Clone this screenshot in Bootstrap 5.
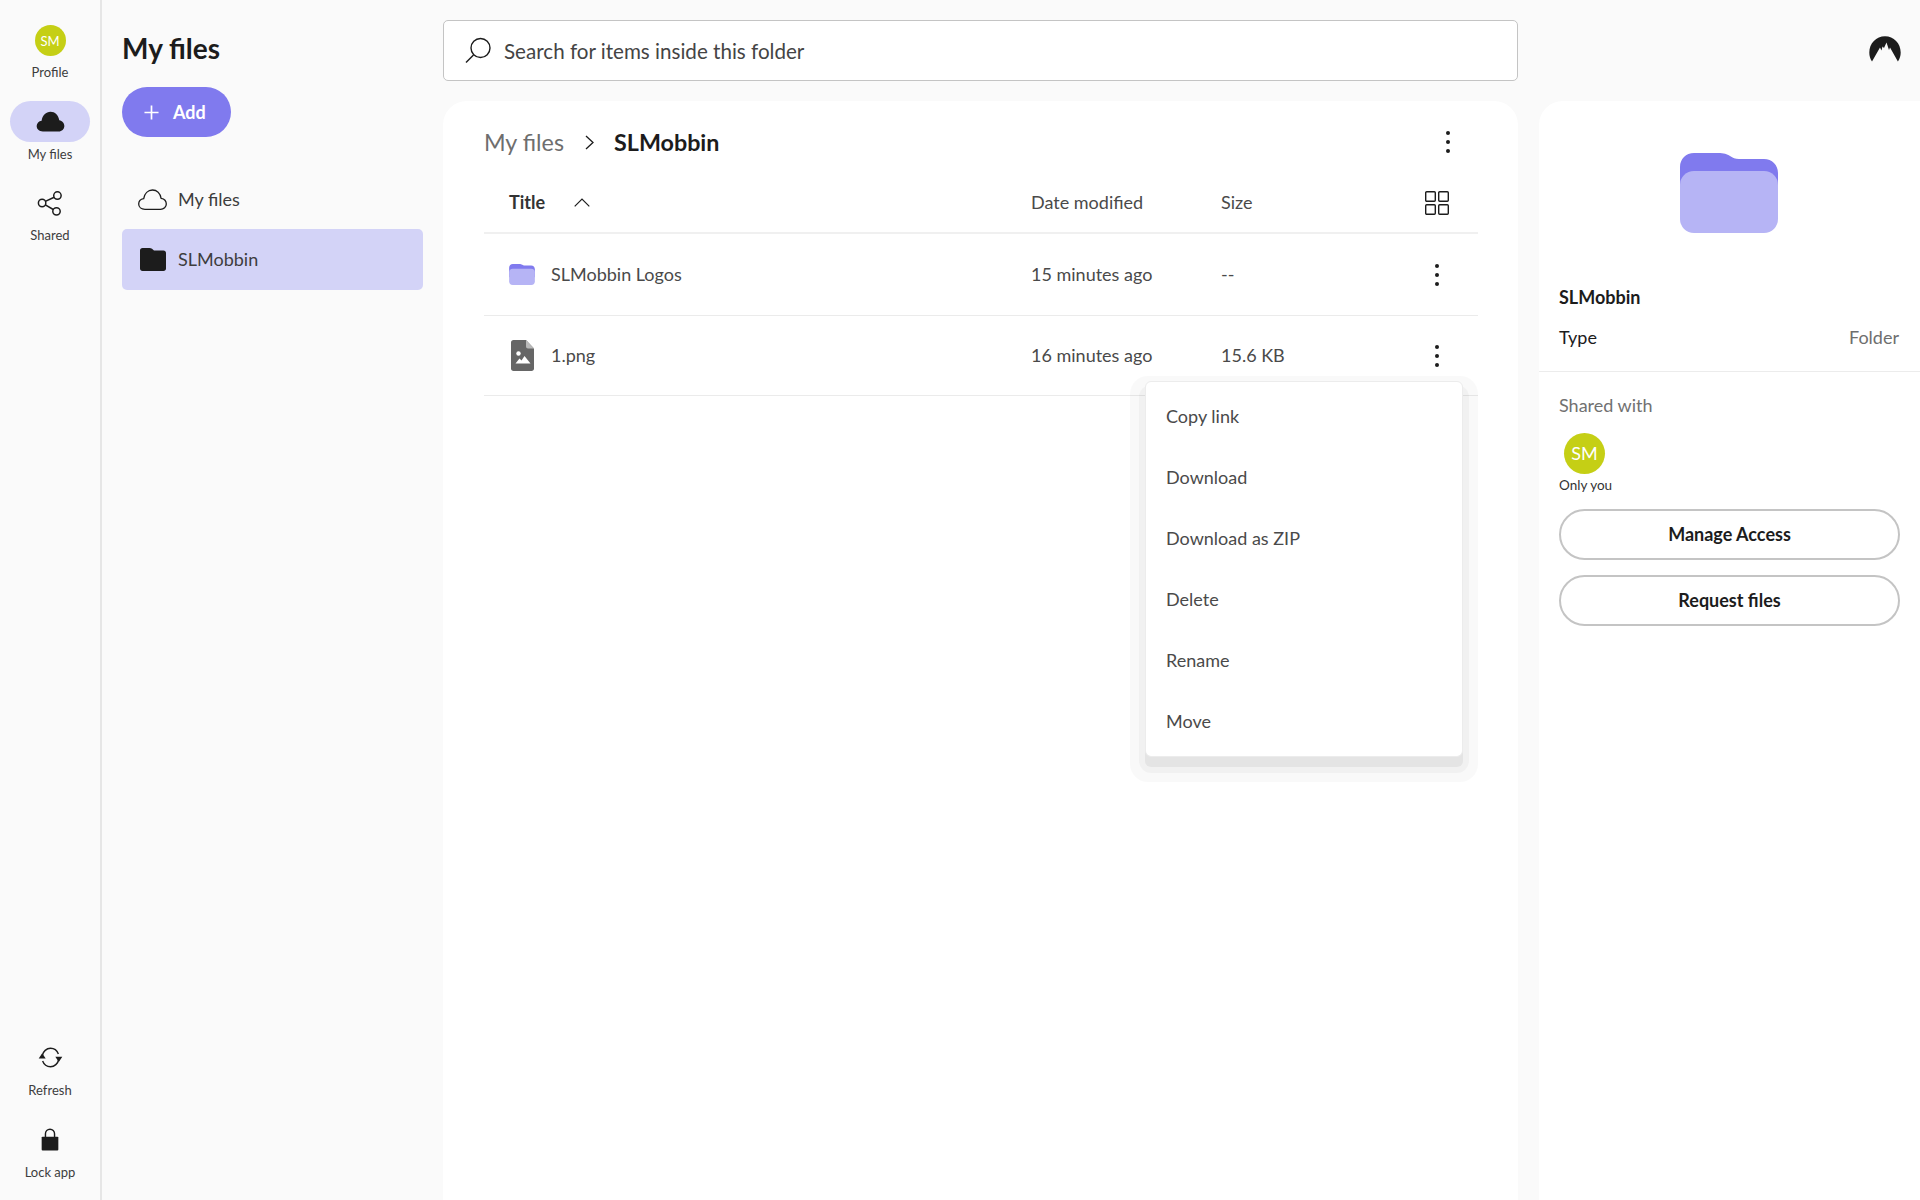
<!DOCTYPE html>
<html lang="en">
<head>
  <meta charset="UTF-8">
  <title>My files</title>
  <meta name="viewport" content="width=device-width, initial-scale=1">
  <link href="https://cdn.jsdelivr.net/npm/bootstrap@5.3.0/dist/css/bootstrap.min.css" rel="stylesheet" />
  <style>
    body {
      background-color: #fafafa;
      font-family: "Lato", "Liberation Sans", sans-serif;
      color: #1c1c1c;
      height: 1200px;
      overflow: hidden;
    }
    /* icon rail */
    .rail {
      width: 102px;
      border-right: 2px solid #e6e6e6;
      padding-top: 25px;
      padding-bottom: 20px;
    }
    .rail-item {
      display: flex;
      flex-direction: column;
      align-items: center;
      font-size: 13px;
      line-height: 16px;
      color: #3d3d3d;
      margin-bottom: 21px;
    }
    .rail-item.is-tight { margin-bottom: 20px; }
    .rail-icon {
      width: 80px;
      height: 41px;
      margin-bottom: 4px;
      display: flex;
      align-items: center;
      justify-content: center;
      border-radius: 21px;
    }
    .rail-icon.is-on { background-color: #d3d3f7; }
    .avatar-sm {
      width: 31px;
      height: 31px;
      margin-bottom: 8px;
      border-radius: 50%;
      background-color: #c5cf15;
      color: #fff;
      font-size: 13px;
      display: flex;
      align-items: center;
      justify-content: center;
    }
    /* folder panel */
    .folder-panel {
      width: 341px;
      padding: 0 20px;
    }
    .panel-title {
      font-size: 28px;
      font-weight: 700;
      line-height: 34px;
      margin: 31px 0 22px;
    }
    .add-btn {
      width: 109px;
      height: 50px;
      padding: 0 0 0 22px;
      gap: 14px;
      border-radius: 25px;
      background-color: #807aee;
      border: 0;
      color: #fff;
      font-size: 18px;
      font-weight: 700;
      margin-bottom: 32px;
    }
    .add-btn:hover { background-color: #807aee; color: #fff; }
    .tree-row {
      height: 61px;
      border-radius: 5px;
      padding-left: 18px;
      font-size: 18px;
      color: #3d3d3d;
    }
    .tree-row.is-on { background-color: #d3d3f7; }
    .tree-row svg { margin-right: 12px; }
    .tree-row.is-plain { height: 60px; padding-left: 16px; }
    .tree-row.is-plain svg { margin-right: 11px; }
    /* top row */
    .search-row { height: 101px; padding-top: 20px; }
    .search-box {
      width: 1075px;
      height: 61px;
      background-color: #fff;
      border: 1px solid #c4c4c4;
      border-radius: 5px;
      padding: 2px 0 0 20px;
      font-size: 20.6px;
      color: #444;
    }
    .search-box svg { margin-right: 12px; margin-top: -2px; }
    .corner-logo { margin-left: 351px; margin-top: 16px; }
    /* file list */
    .files-card {
      width: 1075px;
      background-color: #fff;
      border-radius: 24px 24px 0 0;
      padding: 0 40px 0 41px;
    }
    .crumbs {
      height: 74px;
      padding: 8px 27px 0 0;
      font-size: 23.3px;
    }
    .crumb-dim { color: #6e6e6e; }
    .crumb-now { font-weight: 700; }
    .crumb-sep { margin: 0 20px 0 21px; }
    .list-row {
      padding-left: 25px;
      font-size: 18px;
      color: #4a4a4a;
      border-bottom: 1px solid #ebebeb;
    }
    .list-head { height: 59px; padding-bottom: 2px; border-bottom-width: 2px; border-color: #f0f0f0; }
    .row-a { height: 82px; }
    .row-b { height: 80px; }
    .name-col { width: 522px; }
    .date-col { width: 190px; }
    .size-col { width: 196px; }
    .act-col { width: 40px; display: flex; justify-content: center; }
    .title-head { font-weight: 700; color: #333; }
    .sort-mark { margin-left: 29px; }
    .file-icon { width: 26px; margin-right: 16px; display: flex; justify-content: center; }
    /* context menu */
    .row-menu.dropdown-menu {
      position: absolute;
      top: 280px;
      left: 702px;
      width: 318px;
      padding: 4px 0;
      border: 1px solid #ececec;
      border-radius: 6px;
      box-shadow: 0 10px 0 0 rgba(0,0,0,.05), 0 10px 0 6px rgba(0,0,0,.03), 0 10px 0 15px rgba(0,0,0,.025);
    }
    .row-menu .dropdown-item {
      height: 61px;
      line-height: 61px;
      padding: 0 20px;
      font-size: 18px;
      color: #4a4a4a;
    }
    /* details */
    .details-card {
      width: 381px;
      background-color: #fff;
      border-radius: 24px 0 0 0;
    }
    .details-top { padding: 52px 21px 0 20px; height: 271px; border-bottom: 1px solid #ececec; }
    .details-name { font-size: 18px; font-weight: 700; line-height: 22px; margin-top: 53px; }
    .details-type { font-size: 18px; line-height: 22px; margin-top: 18px; }
    .type-val { color: #6e6e6e; }
    .details-body { padding: 22px 20px 0 20px; }
    .shared-label { font-size: 18px; line-height: 22px; color: #717171; }
    .avatar-md {
      width: 41px;
      height: 41px;
      margin: 17px 0 0 5px;
      border-radius: 50%;
      background-color: #c5cf15;
      color: #fff;
      font-size: 18px;
      display: flex;
      align-items: center;
      justify-content: center;
    }
    .only-you { font-size: 13.5px; line-height: 16px; margin: 3px 0 16px; color: #333; }
    .pill-btn {
      height: 51px;
      border-radius: 26px;
      border: 2px solid #c4c4c4;
      background-color: #fff;
      font-size: 18px;
      font-weight: 700;
      color: #1c1c1c;
      margin-bottom: 15px;
    }
    .pill-btn:hover { background-color: #fff; border-color: #c4c4c4; color: #1c1c1c; }
  </style>
</head>
<body class="d-flex">

<!-- Icon rail -->
<aside class="rail d-flex flex-column justify-content-between flex-shrink-0">
  <div>
    <div class="rail-item">
      <div class="avatar-sm">SM</div>
      Profile
    </div>
    <div class="rail-item is-tight">
      <div class="rail-icon is-on">
        <svg width="29" height="21" viewBox="0 0 30 22"><path fill="#1c1c1c" d="M7 21.500C3 21.500.5 19 .5 15.800c0-3 2.200-5.300 5.200-5.700C6.500 4.600 10.300.8 15 .8c4.600 0 8.300 3.600 9.200 8.900 3 .5 5.300 2.900 5.300 6 0 3.200-2.600 5.800-6 5.800H7z"/></svg>
      </div>
      My files
    </div>
    <div class="rail-item">
      <div class="rail-icon">
        <svg width="26" height="26" viewBox="0 0 28 28" fill="none" stroke="#1c1c1c" stroke-width="1.600"><circle cx="22" cy="6" r="4"/><circle cx="5.500" cy="14" r="4"/><circle cx="21" cy="23" r="4"/><path d="M9 12.300l9.500-4.500M9 16l8.500 5"/></svg>
      </div>
      Shared
    </div>
  </div>
  <div>
    <div class="rail-item">
      <div class="rail-icon">
        <svg width="25" height="21" viewBox="0 0 28 24" fill="none" stroke="#1c1c1c" stroke-width="1.600"><path d="M4.500 10C5.500 5 9.500 1.500 14 1.500c4 0 7.500 2.500 9 6.500M23.500 14c-1 5-5 8.500-9.500 8.500-4 0-7.500-2.500-9-6.500"/><path fill="#1c1c1c" stroke="none" d="M4.500 7L.5 13h8zM23.500 17l-4-6h8z"/></svg>
      </div>
      Refresh
    </div>
    <div class="rail-item mb-0">
      <div class="rail-icon">
        <svg width="18" height="23" viewBox="0 0 19 24"><path fill="none" stroke="#1c1c1c" stroke-width="1.500" d="M4.700 10V6a4.800 4.800 0 0 1 9.600 0v4"/><rect x=".7" y="9" width="17.600" height="14.500" rx="1" fill="#1c1c1c"/></svg>
      </div>
      Lock app
    </div>
  </div>
</aside>

<!-- Folder panel -->
<aside class="folder-panel flex-shrink-0">
  <h1 class="panel-title">My files</h1>
  <button class="btn add-btn d-flex align-items-center" type="button">
    <svg width="15" height="15" viewBox="0 0 16 16" stroke="#fff" stroke-width="1.800"><path d="M8 .5v15M.5 8h15"/></svg>
    Add
  </button>
  <div class="tree-row is-plain d-flex align-items-center">
    <svg width="29" height="21" viewBox="0 0 29 21" fill="none" stroke="#1c1c1c" stroke-width="1.300"><path d="M7 20.300C3.300 20.300.7 18 .7 15c0-2.800 2-5 5-5.400C6.500 4.500 10 1 14.500 1c4.300 0 7.700 3.300 8.600 8.300 3 .5 5.200 2.800 5.200 5.700 0 3-2.500 5.300-5.800 5.300H7z"/></svg>
    My files
  </div>
  <div class="tree-row is-on d-flex align-items-center">
    <svg width="26" height="23" viewBox="0 0 26 23"><path fill="#1c1c1c" d="M0 2.500C0 1 1 0 2.500 0h7c1 0 1.800.3 2.500.8L14 2.500h9.500C25 2.500 26 3.500 26 5v15.500c0 1.500-1 2.500-2.500 2.500h-21C1 23 0 22 0 20.500z"/></svg>
    SLMobbin
  </div>
</aside>

<!-- Workspace -->
<div class="flex-grow-1 d-flex flex-column">
  <div class="search-row d-flex align-items-start">
    <div class="search-box d-flex align-items-center flex-shrink-0">
      <svg width="28" height="28" viewBox="0 0 28 28" fill="none" stroke="#1c1c1c" stroke-width="1.400"><circle cx="16.500" cy="11" r="9.500"/><path d="M9.500 18L2 25.500"/></svg>
      Search for items inside this folder
    </div>
    <svg class="corner-logo flex-shrink-0" width="32" height="26" viewBox="0 0 32 26"><path fill="#1c1c1c" d="M3 25.500C1.200 22.800 .3 19.800.3 16.500.3 7.500 7.300.3 16 .3s15.700 7.200 15.700 16.200c0 3.300-1 6.300-2.800 9l-7.900-14-1 2.500L17.500 6.500 15 12l-1.500-1.500-1 4-1.500-3z"/></svg>
  </div>

  <div class="d-flex flex-grow-1" style="gap:21px">
    <main class="files-card position-relative flex-shrink-0">
      <div class="crumbs d-flex align-items-center">
        <span class="crumb-dim">My files</span>
        <svg class="crumb-sep" width="9" height="15" viewBox="0 0 9 15" fill="none" stroke="#1c1c1c" stroke-width="1.300"><path d="M1 1l7 6.500L1 14"/></svg>
        <span class="crumb-now">SLMobbin</span>
        <svg class="ms-auto" width="6" height="24" viewBox="0 0 6 24" fill="#1c1c1c"><circle cx="3" cy="3" r="2"/><circle cx="3" cy="12" r="2"/><circle cx="3" cy="21" r="2"/></svg>
      </div>

      <div class="list-row list-head d-flex align-items-center">
        <div class="name-col d-flex align-items-center">
          <span class="title-head">Title</span>
          <svg class="sort-mark" width="16" height="9" viewBox="0 0 16 9" fill="none" stroke="#1c1c1c" stroke-width="1.200"><path d="M.7 8.300L8 1l7.300 7.300"/></svg>
        </div>
        <div class="date-col">Date modified</div>
        <div class="size-col">Size</div>
        <div class="act-col">
          <svg width="24" height="24" viewBox="0 0 24 24" fill="none" stroke="#1c1c1c" stroke-width="1.400"><rect x=".7" y=".7" width="9.600" height="9.600" rx="1"/><rect x="13.700" y=".7" width="9.600" height="9.600" rx="1"/><rect x=".7" y="13.700" width="9.600" height="9.600" rx="1"/><rect x="13.700" y="13.700" width="9.600" height="9.600" rx="1"/></svg>
        </div>
      </div>

      <div class="list-row row-a d-flex align-items-center">
        <div class="name-col d-flex align-items-center">
          <span class="file-icon">
            <svg width="26" height="21" viewBox="0 0 98 80"><path fill="#807aee" d="M0 14C0 6 6 0 14 0h24c6 0 9 1 12 3 3 2 5 3 9 3h25c8 0 14 6 14 14v30H0z"/><rect y="18" width="98" height="62" rx="14" fill="#b6b4f5"/></svg>
          </span>
          SLMobbin Logos
        </div>
        <div class="date-col">15 minutes ago</div>
        <div class="size-col">--</div>
        <div class="act-col">
          <svg width="6" height="24" viewBox="0 0 6 24" fill="#1c1c1c"><circle cx="3" cy="3" r="2"/><circle cx="3" cy="12" r="2"/><circle cx="3" cy="21" r="2"/></svg>
        </div>
      </div>

      <div class="list-row row-b d-flex align-items-center">
        <div class="name-col d-flex align-items-center">
          <span class="file-icon">
            <svg width="23" height="31" viewBox="0 0 23 31"><path fill="#666" d="M2.500 0H15l8 8.500v20c0 1.500-1 2.500-2.500 2.500h-18C1 31 0 30 0 28.500v-26C0 1 1 0 2.500 0z"/><path fill="#b9b9b9" d="M15 0l8 8.500h-6c-1.200 0-2-.8-2-2z"/><circle cx="7.500" cy="13.500" r="2.200" fill="#fff"/><path fill="#fff" d="M4.500 23.500l4-5 2 2 3-4.500 6 7.500z"/></svg>
          </span>
          1.png
        </div>
        <div class="date-col">16 minutes ago</div>
        <div class="size-col">15.6 KB</div>
        <div class="act-col">
          <svg width="6" height="24" viewBox="0 0 6 24" fill="#1c1c1c"><circle cx="3" cy="3" r="2"/><circle cx="3" cy="12" r="2"/><circle cx="3" cy="21" r="2"/></svg>
        </div>
      </div>

      <ul class="dropdown-menu show row-menu">
        <li><a class="dropdown-item" href="#">Copy link</a></li>
        <li><a class="dropdown-item" href="#">Download</a></li>
        <li><a class="dropdown-item" href="#">Download as ZIP</a></li>
        <li><a class="dropdown-item" href="#">Delete</a></li>
        <li><a class="dropdown-item" href="#">Rename</a></li>
        <li><a class="dropdown-item" href="#">Move</a></li>
      </ul>
    </main>

    <!-- Details -->
    <section class="details-card flex-shrink-0">
      <div class="details-top">
        <div class="text-center">
          <svg class="d-block mx-auto" width="98" height="80" viewBox="0 0 98 80"><path fill="#807aee" d="M0 14C0 6 6 0 14 0h24c6 0 9 1 12 3 3 2 5 3 9 3h25c8 0 14 6 14 14v30H0z"/><rect y="18" width="98" height="62" rx="14" fill="#b6b4f5"/></svg>
        </div>
        <div class="details-name">SLMobbin</div>
        <div class="details-type d-flex justify-content-between">
          <span>Type</span><span class="type-val">Folder</span>
        </div>
      </div>
      <div class="details-body">
        <div class="shared-label">Shared with</div>
        <div class="avatar-md">SM</div>
        <div class="only-you">Only you</div>
        <button class="btn pill-btn w-100 d-block" type="button">Manage Access</button>
        <button class="btn pill-btn w-100 d-block" type="button">Request files</button>
      </div>
    </section>
  </div>
</div>

<script src="https://cdn.jsdelivr.net/npm/bootstrap@5.3.0/dist/js/bootstrap.bundle.min.js"></script>
</body>
</html>
